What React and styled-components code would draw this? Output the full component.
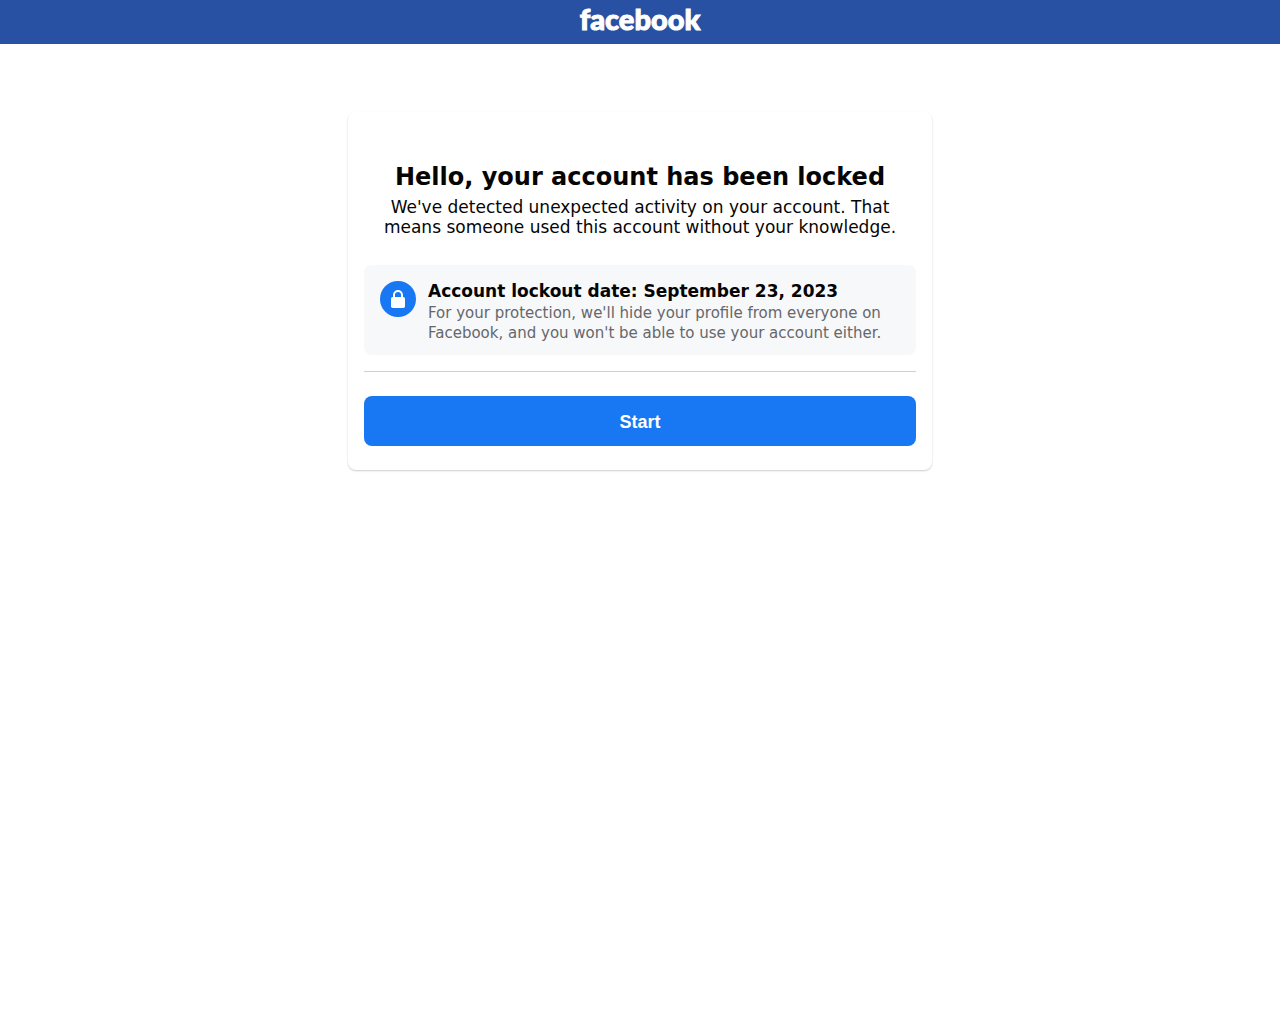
import React from 'react';
import styled, { createGlobalStyle } from 'styled-components';

const colors = {
  navy: '#2851a3',
  blue: '#1877f2',
  white: '#ffffff',
  mist: '#f7f8fa',
  line: '#ced0d4',
  black: '#050505',
  gray: '#65676b',
};

const GlobalStyle = createGlobalStyle`
  * {
    box-sizing: border-box;
  }
  body {
    background-color: ${colors.white};
    color: ${colors.black};
    font-family: 'DejaVu Sans', sans-serif;
    margin: 0;
  }
  h1, h2, p {
    margin: 0;
  }
`;

const Header = styled.header`
  align-items: center;
  background-color: ${colors.navy};
  display: flex;
  height: 44px;
  justify-content: center;
  padding-bottom: 6px;
`;

const Logo = styled.a`
  color: ${colors.white};
  font-family: Lato, sans-serif;
  font-size: 29px;
  font-weight: 900;
  line-height: 38px;
  text-decoration: none;
  -webkit-text-stroke: 1px ${colors.white};
`;

const Main = styled.main`
  display: flex;
  justify-content: center;
  padding: 68px 16px;
`;

const Card = styled.section`
  border-radius: 8px;
  box-shadow: 0 1px 2px rgba(0, 0, 0, .2);
  max-width: 584px;
  padding: 48px 16px 24px;
  width: 100%;
`;

const Intro = styled.div`
  padding: 0 16px 28px;
  text-align: center;
  h1 {
    font-size: 24px;
    font-weight: 700;
    line-height: 34px;
    margin-bottom: 3px;
  }
  p {
    font-size: 17px;
    line-height: 20px;
  }
`;

const Notice = styled.div`
  background-color: ${colors.mist};
  border-radius: 8px;
  display: flex;
  gap: 12px;
  padding: 16px 16px 12px;
`;

const NoticeIcon = styled.span`
  align-items: center;
  background-color: ${colors.blue};
  border-radius: 50%;
  display: flex;
  flex-shrink: 0;
  height: 36px;
  justify-content: center;
  width: 36px;
`;

const NoticeText = styled.div`
  h2 {
    font-size: 17px;
    font-weight: 700;
    line-height: 20px;
    margin-bottom: 2px;
  }
  p {
    color: ${colors.gray};
    font-size: 15px;
    line-height: 20px;
  }
`;

const Divider = styled.hr`
  border: 0;
  border-top: solid 1px ${colors.line};
  margin: 16px 0 24px;
`;

const StartButton = styled.button`
  background-color: ${colors.blue};
  border: 0;
  border-radius: 8px;
  color: ${colors.white};
  cursor: pointer;
  font-family: 'Liberation Sans', Arial, sans-serif;
  font-size: 18px;
  font-weight: 700;
  height: 50px;
  padding: 2px 0 0;
  width: 100%;
`;

const LockIcon = () => (
  <svg width="20" height="20" viewBox="0 0 20 20" aria-hidden="true">
    <path d="M6 10V6a4 4 0 0 1 8 0v4" fill="none" stroke="#fff" strokeWidth="2" />
    <rect x="3" y="8" width="14" height="11" rx="1.8" fill="#fff" />
  </svg>
);

const App = () => (
  <>
    <GlobalStyle />
    <Header>
      <Logo href="#">facebook</Logo>
    </Header>
    <Main>
      <Card>
        <Intro>
          <h1>Hello, your account has been locked</h1>
          <p>
            We&apos;ve detected unexpected activity on your account. That means
            someone used this account without your knowledge.
          </p>
        </Intro>
        <Notice>
          <NoticeIcon>
            <LockIcon />
          </NoticeIcon>
          <NoticeText>
            <h2>Account lockout date: September 23, 2023</h2>
            <p>
              For your protection, we&apos;ll hide your profile from everyone on
              Facebook, and you won&apos;t be able to use your account either.
            </p>
          </NoticeText>
        </Notice>
        <Divider />
        <StartButton type="button">Start</StartButton>
      </Card>
    </Main>
  </>
);

export default App;
